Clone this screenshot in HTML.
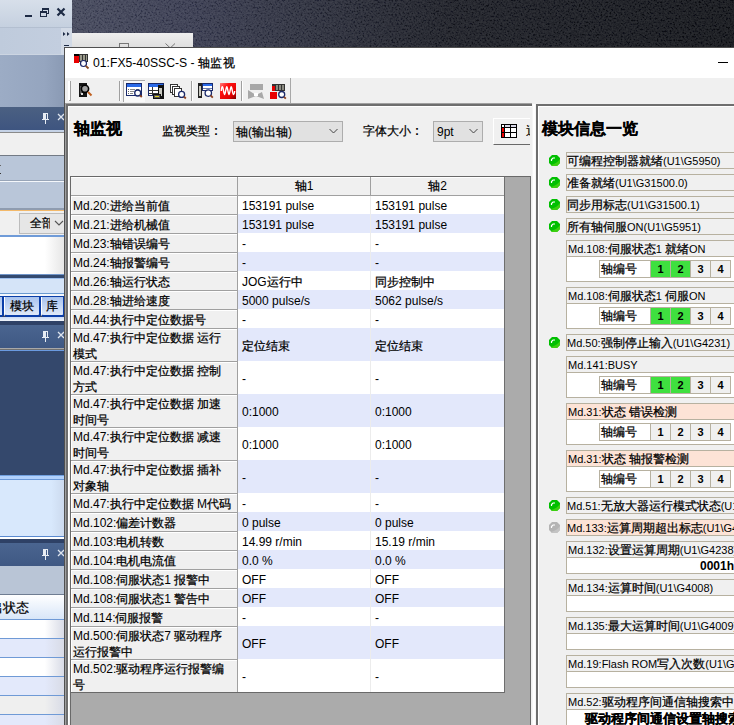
<!DOCTYPE html>
<html><head><meta charset="utf-8">
<style>
*{margin:0;padding:0;box-sizing:border-box}
html,body{width:734px;height:725px;overflow:hidden}
body{position:relative;font-family:"Liberation Sans",sans-serif;font-size:12px;color:#000;background:linear-gradient(90deg,#3e4256 0px,#3e4256 72px,#32354a 190px,#262937 300px,#14161d 450px,#0a0c10 734px)}
.a{position:absolute}
.tr{position:absolute;left:0;width:433px}
.tr .c0{position:absolute;left:0;top:0;width:166px;height:100%;background:#f0f0f0;border-top:1px solid #a0a0a0;box-shadow:inset 1px 1px 0 #fff;padding:2px 0 0 2px;line-height:16px;white-space:nowrap}
.tr .c1,.tr .c2{position:absolute;top:0;height:100%;padding-left:4px;padding-top:2px;line-height:19px;white-space:nowrap}
.tr .c1{left:166px;width:133px;border-left:1px solid #a0a0a0}
.tr .c2{left:299px;width:134px;border-left:1px solid #ececec}
.tr.t2 .c1,.tr.t2 .c2{line-height:32px}
.tr.t2 .c0{line-height:15.5px;padding-top:2px}
.w .c1,.w .c2{background:#fff}
.b .c1,.b .c2{background:#e3e8fb}
.led{position:absolute;left:549px}
.box{position:absolute;left:566px;width:180px;height:17px;font-size:11px;border:1px solid #b7b1a0;background:#f0f0f0;padding-left:0;padding-top:1px;line-height:15px;white-space:nowrap;color:#000;overflow:hidden}
.grp{position:absolute;left:566px;width:180px;font-size:11px;border:1px solid #b7b1a0;background:#fff}
.grp .hd{height:16px;background:#f0f0f0;border-bottom:1px solid #b7b1a0;padding-left:1px;padding-top:1px;line-height:15px;white-space:nowrap;overflow:hidden}
.grp .hd.pk{background:#fde3d6}
.ax{position:absolute;left:32px;top:19px;height:18px;border:1px solid #b7b1a0;display:flex;background:#fff}
.ax div{height:16px;line-height:16px;text-align:center;font-weight:bold;width:20px;border-left:1px solid #b7b1a0;background:#f0f0f0}
.ax div.n{width:50px;border-left:0;background:#fff;font-weight:normal;text-align:left;padding-left:1px;font-size:12px}
.ax div.g{background:#3fe03f}
.k{display:inline-block;text-align:justify;text-align-last:justify;text-indent:0;-webkit-text-stroke:0.25px}
.box .k,.grp .hd .k{font-size:12px}
</style></head><body>

<svg class="a" style="left:72px;top:0" width="662" height="48"><filter id="nz" x="0" y="0" width="100%" height="100%"><feTurbulence type="fractalNoise" baseFrequency="0.55" numOctaves="2" seed="7"/><feColorMatrix values="2.5 0 0 0 -0.75  2.5 0 0 0 -0.75  2.5 0 0 0 -0.7  0 0 0 0 0.12"/></filter><rect width="662" height="48" filter="url(#nz)"/></svg>
<!-- left app panel -->
<div class="a" style="left:0;top:0;width:72px;height:28px;background:linear-gradient(#d7dfea,#c5d0df);border-bottom:1px solid #b3bfd0"></div>
<div class="a" style="left:25px;top:15px;width:7px;height:2px;background:#1d2a44"></div>
<div class="a" style="left:42px;top:8px;width:7px;height:6px;border:1px solid #1d2a44;border-top-width:2px"></div>
<div class="a" style="left:40px;top:11px;width:7px;height:6px;border:1px solid #1d2a44;border-top-width:2px;background:#cdd6e3"></div>
<svg class="a" style="left:56px;top:7px" width="10" height="10"><path d="M1.5,1.5 L8.5,8.5 M8.5,1.5 L1.5,8.5" stroke="#1d2a44" stroke-width="2.2"/></svg>
<div class="a" style="left:0;top:28px;width:61px;height:27px;background:linear-gradient(90deg,#bfcbdc,#c3cedf);border-bottom:1px solid #ccd5e2"></div>
<div class="a" style="left:61px;top:28px;width:11px;height:27px;background:#d2dae6"></div>
<svg class="a" style="left:63px;top:32px" width="8" height="5"><path d="M0,0 L2.5,2 L0,4Z M4,0 L6.5,2 L4,4Z" fill="#1d2a44"/></svg>
<div class="a" style="left:64px;top:45px;width:5px;height:1px;background:#1d2a44"></div>
<div class="a" style="left:0;top:55px;width:64px;height:52px;background:linear-gradient(90deg,#9cacc5,#95a5bf 70%,#8a9ab4)"></div>
<div class="a" style="left:0;top:107px;width:64px;height:23px;background:linear-gradient(#4b6082,#3e5580)"></div>
<div class="a" style="left:0;top:130px;width:64px;height:2px;background:#c5d2e6"></div>
<div class="a" style="left:0;top:132px;width:64px;height:1px;background:#8a8a8a"></div><div class="a" style="left:0;top:133px;width:64px;height:22px;background:#f0f0f0"></div>
<div class="a" style="left:0;top:155px;width:64px;height:1px;background:#737a85"></div>
<div class="a" style="left:0;top:156px;width:64px;height:52px;background:#b9c6d9"></div>
<div class="a" style="left:0;top:180px;width:64px;height:1px;background:#98a5b8"></div><div class="a" style="left:0;top:181px;width:64px;height:1px;background:#f4f7fb"></div>
<div class="a" style="left:0;top:208px;width:64px;height:2px;background:#8f9cb0"></div>
<div class="a" style="left:0;top:210px;width:64px;height:1px;background:#f3b96a"></div>
<div class="a" style="left:0;top:211px;width:64px;height:24px;background:#f0f0f0"></div>
<div class="a" style="left:19px;top:213px;width:47px;height:21px;border:1px solid #bcbcbc;background:#e6e6e6;padding-left:10px;line-height:19px;overflow:hidden;white-space:nowrap"><span class="k" style="width:2em">全部</span></div>
<div class="a" style="left:50px;top:214px;width:14px;height:19px;background:#e6e6e6"></div>
<svg class="a" style="left:54px;top:219px" width="10" height="8"><path d="M1,2 L5,6 L9,2" stroke="#555" stroke-width="1.1" fill="none"/></svg>
<div class="a" style="left:0;top:165px;width:1px;height:1px;background:#666"></div><div class="a" style="left:0;top:173px;width:1px;height:1px;background:#333"></div>
<div class="a" style="left:0;top:235px;width:64px;height:2px;background:#6f9bd8"></div>
<div class="a" style="left:0;top:237px;width:64px;height:37px;background:linear-gradient(90deg,#fff 70%,#e6e6e6)"></div>
<div class="a" style="left:0;top:274px;width:64px;height:1px;background:#6f94c8"></div>
<div class="a" style="left:0;top:275px;width:64px;height:3px;background:#334a70"></div>
<div class="a" style="left:0;top:278px;width:64px;height:1px;background:#9ec0ee"></div>
<div class="a" style="left:0;top:279px;width:64px;height:14px;background:#d5e4f8"></div>
<div class="a" style="left:0;top:293px;width:64px;height:1px;background:#6a9ad0"></div>
<div class="a" style="left:0;top:294px;width:64px;height:2px;background:#f4f7fc"></div>
<div class="a" style="left:0;top:296px;width:64px;height:2px;background:#0b3ea8"></div>
<div class="a" style="left:0;top:317px;width:64px;height:4px;background:linear-gradient(#c8daf6,#f0f4fa)"></div>
<div class="a" style="left:-20px;top:297px;width:24px;height:20px;border:2px solid #0b3ea8;border-top:0;border-radius:0 0 3px 3px;background:linear-gradient(#a9c3ee,#dfe9f8)"></div>
<div class="a" style="left:4px;top:297px;width:37px;height:20px;border:2px solid #0b3ea8;border-top:0;border-left:1px solid #fff;border-radius:0 0 3px 3px;background:linear-gradient(#a9c3ee,#dfe9f8);padding-left:5px;line-height:18px;white-space:nowrap"><span class="k" style="width:2em">模块</span></div>
<div class="a" style="left:41px;top:297px;width:24px;height:20px;border:2px solid #0b3ea8;border-top:0;border-left:1px solid #fff;border-radius:0 0 3px 3px;background:linear-gradient(#a9c3ee,#dfe9f8);padding-left:4px;line-height:18px;white-space:nowrap"><span class="k" style="width:1em">库</span></div>
<div class="a" style="left:0;top:321px;width:64px;height:4px;background:#2e4166"></div><div class="a" style="left:0;top:325px;width:64px;height:23px;background:linear-gradient(#4a6590,#3f5883)"></div>
<div class="a" style="left:0;top:348px;width:64px;height:1px;background:#a8a8a8"></div><div class="a" style="left:0;top:349px;width:64px;height:1px;background:#707070"></div><div class="a" style="left:0;top:350px;width:64px;height:1px;background:#6a9ae0"></div>
<div class="a" style="left:0;top:351px;width:64px;height:124px;background:#34486c"></div>
<div class="a" style="left:0;top:475px;width:64px;height:1px;background:#70a0e0"></div><div class="a" style="left:0;top:476px;width:64px;height:3px;background:#b0d0fc"></div><div class="a" style="left:0;top:479px;width:64px;height:1px;background:#6a98d8"></div>
<div class="a" style="left:0;top:480px;width:64px;height:56px;background:linear-gradient(90deg,#d8e8fc 80%,#ccdaee)"></div>
<div class="a" style="left:0;top:536px;width:64px;height:1px;background:#5a8ad0"></div>
<div class="a" style="left:0;top:537px;width:64px;height:2px;background:#fff"></div>
<div class="a" style="left:0;top:539px;width:64px;height:4px;background:#2e4166"></div><div class="a" style="left:0;top:543px;width:64px;height:23px;background:linear-gradient(#4a6590,#3f5883)"></div>
<div class="a" style="left:0;top:566px;width:64px;height:28px;background:#b9c5d6"></div>
<div class="a" style="left:0;top:594px;width:64px;height:1px;background:#6f7d92"></div>
<div class="a" style="left:0;top:595px;width:64px;height:24px;background:linear-gradient(#fff,#d8e6f8);padding-left:0;line-height:26px;white-space:nowrap;font-size:13px;text-indent:-10px"><span class="k" style="width:3em">出状态</span></div>
<div class="a" style="left:0;top:619px;width:64px;height:19px;border-top:1px solid #6f9ad6;background:linear-gradient(90deg,#ffffff 70%,#d8dbe6)"></div>
<div class="a" style="left:0;top:638px;width:64px;height:19px;border-top:1px solid #6f9ad6;background:linear-gradient(90deg,#e3e9fb 70%,#d8dbe6)"></div>
<div class="a" style="left:0;top:657px;width:64px;height:19px;border-top:1px solid #6f9ad6;background:linear-gradient(90deg,#ffffff 70%,#d8dbe6)"></div>
<div class="a" style="left:0;top:676px;width:64px;height:19px;border-top:1px solid #6f9ad6;background:linear-gradient(90deg,#e3e9fb 70%,#d8dbe6)"></div>
<div class="a" style="left:0;top:695px;width:64px;height:19px;border-top:1px solid #6f9ad6;background:linear-gradient(90deg,#efefef 70%,#d8dbe6)"></div>
<div class="a" style="left:0;top:714px;width:64px;height:19px;border-top:1px solid #6f9ad6;background:linear-gradient(90deg,#e3e9fb 70%,#d8dbe6)"></div>
<!-- pins -->
<svg class="a" style="left:40px;top:107px" width="24" height="24" viewBox="0 0 24 24" shape-rendering="crispEdges">
<rect x="3" y="6" width="1" height="6" fill="#e8edf4"/><rect x="7" y="6" width="1" height="6" fill="#e8edf4"/><rect x="3" y="6" width="5" height="1" fill="#e8edf4"/><rect x="4" y="6" width="2" height="6" fill="#e8edf4"/>
<rect x="2" y="12" width="7" height="1" fill="#e8edf4"/><rect x="5" y="13" width="1" height="4" fill="#e8edf4"/>
<path d="M18,7 L24,13 M24,7 L18,13" stroke="#dfe5ee" stroke-width="1.3" shape-rendering="geometricPrecision"/>
</svg>
<svg class="a" style="left:40px;top:325px" width="24" height="24" viewBox="0 0 24 24" shape-rendering="crispEdges">
<rect x="3" y="6" width="1" height="6" fill="#e8edf4"/><rect x="7" y="6" width="1" height="6" fill="#e8edf4"/><rect x="3" y="6" width="5" height="1" fill="#e8edf4"/><rect x="4" y="6" width="2" height="6" fill="#e8edf4"/>
<rect x="2" y="12" width="7" height="1" fill="#e8edf4"/><rect x="5" y="13" width="1" height="4" fill="#e8edf4"/>
<path d="M18,7 L24,13 M24,7 L18,13" stroke="#dfe5ee" stroke-width="1.3" shape-rendering="geometricPrecision"/>
</svg>
<svg class="a" style="left:40px;top:543px" width="24" height="24" viewBox="0 0 24 24" shape-rendering="crispEdges">
<rect x="3" y="6" width="1" height="6" fill="#e8edf4"/><rect x="7" y="6" width="1" height="6" fill="#e8edf4"/><rect x="3" y="6" width="5" height="1" fill="#e8edf4"/><rect x="4" y="6" width="2" height="6" fill="#e8edf4"/>
<rect x="2" y="12" width="7" height="1" fill="#e8edf4"/><rect x="5" y="13" width="1" height="4" fill="#e8edf4"/>
<path d="M18,7 L24,13 M24,7 L18,13" stroke="#dfe5ee" stroke-width="1.3" shape-rendering="geometricPrecision"/>
</svg>

<!-- window behind -->
<div class="a" style="left:72px;top:33px;width:121px;height:20px;background:linear-gradient(#eeeeee,#d9d9d9)"></div>
<div class="a" style="left:119px;top:43px;width:10px;height:8px;border:1px solid #777"></div>
<svg class="a" style="left:165px;top:43px" width="12" height="8"><path d="M0.5,0.5 L10,9.5 M10,0.5 L0.5,9.5" stroke="#777" stroke-width="1"/></svg>

<!-- main window -->
<div class="a" style="left:64px;top:47px;width:680px;height:690px;background:#f0f0f0;border-top:1px solid #505050;border-left:1px solid #505050"></div>
<div class="a" style="left:65px;top:48px;width:680px;height:30px;background:#fff"></div>
<div class="a" style="left:93px;top:55px;font-size:12.2px;line-height:16px;white-space:nowrap">01:FX5-40SSC-S - <span class="k" style="width:3em">轴监视</span></div>
<div class="a" style="left:718px;top:62px;width:10px;height:1px;background:#000"></div>
<!-- toolbar -->
<div class="a" style="left:65px;top:78px;width:680px;height:25px;background:#f0f0f0"></div>
<div class="a" style="left:290px;top:78px;width:1px;height:26px;background:#a8a8a8"></div>
<svg class="a" style="left:0;top:0" width="300" height="105" viewBox="0 0 300 105"><defs><linearGradient id="redg" x1="0" y1="0" x2="1" y2="1"><stop offset="0" stop-color="#ff8080"/><stop offset="0.3" stop-color="#ff1010"/><stop offset="0.75" stop-color="#e00000"/><stop offset="1" stop-color="#700000"/></linearGradient></defs>
 <g shape-rendering="crispEdges">
 <rect x="74" y="54" width="5" height="9" fill="#e80000"/>
 <rect x="74" y="54" width="5" height="2" fill="#000"/>
 <rect x="79" y="54" width="9" height="8" fill="#333"/>
 <rect x="80" y="55" width="2" height="6" fill="#9a9a8a"/>
 <rect x="83" y="55" width="2" height="6" fill="#9a9a8a"/>
 <rect x="86" y="55" width="1" height="6" fill="#9a9a8a"/>
 <!-- grippers/separators -->
 <rect x="68" y="81" width="2" height="20" fill="#fff"/><rect x="70" y="81" width="1" height="20" fill="#a0a0a0"/>
 <rect x="69" y="100" width="2" height="1" fill="#a0a0a0"/>
 <rect x="119" y="81" width="1" height="20" fill="#a0a0a0"/><rect x="120" y="81" width="1" height="20" fill="#fff"/>
 <rect x="191" y="81" width="1" height="20" fill="#a0a0a0"/><rect x="192" y="81" width="1" height="20" fill="#fff"/>
 <rect x="241" y="81" width="1" height="20" fill="#a0a0a0"/><rect x="242" y="81" width="1" height="20" fill="#fff"/>
 <!-- pressed button -->
 <rect x="123" y="80" width="22" height="22" fill="#f9f9f9"/>
 <rect x="123" y="80" width="22" height="1" fill="#a8a8a8"/><rect x="123" y="80" width="1" height="22" fill="#a8a8a8"/>
 <!-- icon1 -->
 <rect x="79" y="83" width="8" height="14" fill="#151515"/>
 <rect x="80" y="86" width="2" height="8" fill="#555"/>
 <rect x="81" y="93" width="2" height="2" fill="#ddd"/>
 <!-- icon2 -->
 <rect x="126" y="83" width="16" height="13" fill="#1a2a6a"/>
 <rect x="127" y="84" width="14" height="3" fill="#2a6ae8"/>
 <rect x="127" y="87" width="14" height="8" fill="#fff"/>
 <rect x="128" y="89" width="1" height="1" fill="#666"/><rect x="130" y="89" width="5" height="1" fill="#888"/><rect x="136" y="89" width="3" height="1" fill="#888"/>
 <rect x="128" y="91" width="1" height="1" fill="#666"/><rect x="130" y="91" width="4" height="1" fill="#888"/>
 <rect x="128" y="93" width="1" height="1" fill="#666"/><rect x="130" y="93" width="3" height="1" fill="#888"/>
 <!-- icon3 -->
 <rect x="148" y="83" width="16" height="13" fill="#1a2a6a"/>
 <rect x="149" y="84" width="14" height="3" fill="#2a6ae8"/>
 <rect x="149" y="87" width="9" height="8" fill="#fff"/>
 <rect x="149" y="90" width="9" height="1" fill="#333"/><rect x="149" y="93" width="9" height="1" fill="#333"/><rect x="152" y="87" width="1" height="8" fill="#333"/>
 <rect x="158" y="85" width="6" height="14" fill="#111"/>
 <rect x="159" y="88" width="3" height="8" fill="#c8c8c0"/>
 <rect x="153" y="94" width="8" height="5" fill="#111"/>
 <rect x="154" y="95" width="6" height="3" fill="#555"/>
 <rect x="155" y="96" width="4" height="1" fill="#e0d020"/>
 <!-- icon4 -->
 <rect x="170" y="84" width="7" height="8" fill="#fff" stroke="#333" stroke-width="1"/>
 <rect x="172" y="86" width="7" height="8" fill="#fff" stroke="#333" stroke-width="1"/>
 <rect x="174" y="88" width="7" height="8" fill="#fff" stroke="#333" stroke-width="1"/>
 <!-- icon5 -->
 <rect x="198" y="83" width="4" height="15" fill="#222"/>
 <rect x="199" y="86" width="2" height="10" fill="#c8c8c0"/>
 <rect x="202" y="83" width="11" height="8" fill="#1a2a6a"/>
 <rect x="203" y="84" width="9" height="2" fill="#2a6ae8"/>
 <rect x="203" y="86" width="9" height="4" fill="#fff"/>
 <rect x="203" y="88" width="9" height="1" fill="#6a7ab0"/>
 <!-- icon6 -->
 <rect x="220" y="83" width="16" height="16" fill="url(#redg)"/>
 <!-- icon7 -->
 <rect x="250" y="84" width="13" height="6" fill="#a8a8a8"/>
 <!-- icon8 -->
 <rect x="272" y="84" width="13" height="7" fill="#333"/>
 <rect x="272" y="86" width="3" height="5" fill="#e80000"/>
 <rect x="276" y="85" width="2" height="5" fill="#8a8a80"/><rect x="279" y="85" width="2" height="5" fill="#8a8a80"/><rect x="282" y="85" width="2" height="5" fill="#8a8a80"/>
 <rect x="270" y="92" width="7" height="7" fill="#e80000"/>
 </g>
 <polygon points="248,90 256,95 262,92 264,99 256,96 248,99" fill="#a8a8a8"/>
 <rect x="254" y="93" width="4" height="3" fill="#fff"/>
 <path d="M221.3,91 C221.5,88 221.9,86.8 222.4,86.8 C223.20000000000002,86.8 223.79999999999998,94.5 224.6,94.5 C225.4,94.5 226.0,86.8 226.8,86.8 C227.60000000000002,86.8 228.2,94.5 229,94.5 C229.8,94.5 230.39999999999998,86.8 231.2,86.8 C232.0,86.8 232.6,94.5 233.4,94.5 C234,94.5 234.5,93 234.7,91" fill="none" stroke="#fff" stroke-width="1.4"/>
 <!-- magnifiers -->
 <circle cx="83.5" cy="63.5" r="3" fill="#fff" stroke="#1f2a6a" stroke-width="1.2"/>
 <line x1="85.8" y1="65.8" x2="88.5" y2="68.5" stroke="#8a4a20" stroke-width="1.8"/>
 <circle cx="85" cy="88.8" r="3.6" fill="#a0a0a0" stroke="#000" stroke-width="1.6"/>
 <line x1="88" y1="92" x2="91.5" y2="95.5" stroke="#c06020" stroke-width="2"/>
 <circle cx="137.7" cy="93" r="3" fill="#fff" stroke="#1a2a6a" stroke-width="1.3"/>
 <line x1="140" y1="95.3" x2="141.8" y2="97" stroke="#8a4020" stroke-width="1.8"/>
 <circle cx="181.6" cy="94.4" r="3" fill="#fff" stroke="#1a2a6a" stroke-width="1.3"/>
 <line x1="184" y1="96.7" x2="185.8" y2="98.5" stroke="#8a4020" stroke-width="1.8"/>
 <circle cx="208.3" cy="93.1" r="3.2" fill="#fff" stroke="#1a2a6a" stroke-width="1.3"/>
 <line x1="210.6" y1="95.4" x2="212.8" y2="97.6" stroke="#8a4020" stroke-width="1.8"/>
 <circle cx="281.7" cy="94.5" r="3" fill="#fff" stroke="#1a2a6a" stroke-width="1.3"/>
 <line x1="284" y1="96.8" x2="285.8" y2="98.6" stroke="#8a4020" stroke-width="1.8"/>
</svg>

<!-- left content panel -->
<div class="a" style="left:65px;top:103px;width:467px;height:630px;border-top:1px solid #a0a0a0;border-left:1px solid #a0a0a0"></div>
<div class="a" style="left:66px;top:104px;width:466px;height:630px;border-top:2px solid #6e6e6e;border-left:2px solid #6e6e6e;background:#f0f0f0;box-shadow:inset 1px 1px 0 #fff"></div>
<div class="a" style="left:74px;top:120px;font-size:16px;font-weight:bold;line-height:18px"><span class="k" style="width:3em">轴监视</span></div>
<div class="a" style="left:162px;top:124px;line-height:15px"><span class="k" style="width:4em">监视类型</span><span style="margin-left:4px;font-weight:bold">:</span></div>
<div class="a" style="left:233px;top:121px;width:110px;height:21px;border:1px solid #adadad;background:#e1e1e1;padding-left:2px;padding-top:1px;line-height:19px"><span class="k" style="width:1em">轴</span>(<span class="k" style="width:3em">输出轴</span>)</div>
<svg class="a" style="left:329px;top:128px" width="10" height="7"><path d="M0.5,1 L4.5,5 L8.5,1" stroke="#444" stroke-width="1" fill="none"/></svg>
<div class="a" style="left:363px;top:124px;line-height:15px"><span class="k" style="width:4em">字体大小</span><span style="margin-left:4px;font-weight:bold">:</span></div>
<div class="a" style="left:433px;top:121px;width:50px;height:21px;border:1px solid #adadad;background:#e1e1e1;padding-left:3px;padding-top:1px;line-height:19px">9pt</div>
<svg class="a" style="left:469px;top:128px" width="10" height="7"><path d="M0.5,1 L4.5,5 L8.5,1" stroke="#444" stroke-width="1" fill="none"/></svg>
<div class="a" style="left:492px;top:117px;width:38px;height:29px;overflow:hidden">
<div class="a" style="left:1px;top:1px;width:60px;height:27px;border-top:1px solid #fff;border-left:1px solid #fff;border-bottom:1px solid #696969;background:#f0f0f0"></div>
<svg class="a" style="left:9px;top:7px" width="16" height="14" shape-rendering="crispEdges"><rect x="0" y="0" width="16" height="14" fill="#000"/><rect x="1" y="1" width="14" height="12" fill="#fff"/><rect x="3" y="0" width="1" height="14" fill="#000"/><rect x="9" y="0" width="1" height="14" fill="#000"/><rect x="0" y="3" width="16" height="1" fill="#000"/><rect x="0" y="8" width="16" height="1" fill="#000"/><rect x="1" y="4" width="2" height="4" fill="#e00"/><rect x="1" y="9" width="2" height="4" fill="#e00"/><rect x="4" y="1" width="5" height="2" fill="#d8d8e8"/><rect x="10" y="1" width="5" height="2" fill="#d8d8e8"/></svg>
<div class="a" style="left:34px;top:7px;line-height:15px"><span class="k" style="width:1em">通</span></div>
</div>

<!-- grid -->
<div class="a" style="left:70px;top:176px;width:461px;height:560px;background:#ababab;border-top:1px solid #696969;border-left:1px solid #696969;border-right:1px solid #696969;overflow:hidden">
  <div class="a" style="left:0;top:0;width:433px;height:19px;background:#f0f0f0;border-top:1px solid #fff;border-bottom:1px solid #a0a0a0;z-index:2">
    <div class="a" style="left:166px;top:-1px;width:1px;height:19px;background:#a0a0a0"></div>
    <div class="a" style="left:299px;top:-1px;width:1px;height:19px;background:#a0a0a0"></div>
    <div class="a" style="left:167px;top:0;width:132px;text-align:center;line-height:16px"><span class="k" style="width:1em">轴</span>1</div>
    <div class="a" style="left:300px;top:0;width:133px;text-align:center;line-height:16px"><span class="k" style="width:1em">轴</span>2</div>
  </div>
<div class="tr w" style="top:18px;height:19px"><div class="c0">Md.20:<span class="k" style="width:5em">进给当前值</span></div><div class="c1">153191 pulse</div><div class="c2">153191 pulse</div></div>
<div class="tr b" style="top:37px;height:19px"><div class="c0">Md.21:<span class="k" style="width:5em">进给机械值</span></div><div class="c1">153191 pulse</div><div class="c2">153191 pulse</div></div>
<div class="tr w" style="top:56px;height:19px"><div class="c0">Md.23:<span class="k" style="width:5em">轴错误编号</span></div><div class="c1">-</div><div class="c2">-</div></div>
<div class="tr b" style="top:75px;height:19px"><div class="c0">Md.24:<span class="k" style="width:5em">轴报警编号</span></div><div class="c1">-</div><div class="c2">-</div></div>
<div class="tr w" style="top:94px;height:19px"><div class="c0">Md.26:<span class="k" style="width:5em">轴运行状态</span></div><div class="c1">JOG<span class="k" style="width:3em">运行中</span></div><div class="c2"><span class="k" style="width:5em">同步控制中</span></div></div>
<div class="tr b" style="top:113px;height:19px"><div class="c0">Md.28:<span class="k" style="width:5em">轴进给速度</span></div><div class="c1">5000 pulse/s</div><div class="c2">5062 pulse/s</div></div>
<div class="tr w" style="top:132px;height:19px"><div class="c0">Md.44:<span class="k" style="width:8em">执行中定位数据号</span></div><div class="c1">-</div><div class="c2">-</div></div>
<div class="tr b t2" style="top:151px;height:33px"><div class="c0">Md.47:<span class="k" style="width:7em">执行中定位数据</span> <span class="k" style="width:2em">运行</span><br><span class="k" style="width:2em">模式</span></div><div class="c1"><span class="k" style="width:4em">定位结束</span></div><div class="c2"><span class="k" style="width:4em">定位结束</span></div></div>
<div class="tr w t2" style="top:184px;height:33px"><div class="c0">Md.47:<span class="k" style="width:7em">执行中定位数据</span> <span class="k" style="width:2em">控制</span><br><span class="k" style="width:2em">方式</span></div><div class="c1">-</div><div class="c2">-</div></div>
<div class="tr b t2" style="top:217px;height:33px"><div class="c0">Md.47:<span class="k" style="width:7em">执行中定位数据</span> <span class="k" style="width:2em">加速</span><br><span class="k" style="width:3em">时间号</span></div><div class="c1">0:1000</div><div class="c2">0:1000</div></div>
<div class="tr w t2" style="top:250px;height:33px"><div class="c0">Md.47:<span class="k" style="width:7em">执行中定位数据</span> <span class="k" style="width:2em">减速</span><br><span class="k" style="width:3em">时间号</span></div><div class="c1">0:1000</div><div class="c2">0:1000</div></div>
<div class="tr b t2" style="top:283px;height:33px"><div class="c0">Md.47:<span class="k" style="width:7em">执行中定位数据</span> <span class="k" style="width:2em">插补</span><br><span class="k" style="width:3em">对象轴</span></div><div class="c1">-</div><div class="c2">-</div></div>
<div class="tr w" style="top:316px;height:19px"><div class="c0">Md.47:<span class="k" style="width:7em">执行中定位数据</span> M<span class="k" style="width:2em">代码</span></div><div class="c1">-</div><div class="c2">-</div></div>
<div class="tr b" style="top:335px;height:19px"><div class="c0">Md.102:<span class="k" style="width:5em">偏差计数器</span></div><div class="c1">0 pulse</div><div class="c2">0 pulse</div></div>
<div class="tr w" style="top:354px;height:19px"><div class="c0">Md.103:<span class="k" style="width:4em">电机转数</span></div><div class="c1">14.99 r/min</div><div class="c2">15.19 r/min</div></div>
<div class="tr b" style="top:373px;height:19px"><div class="c0">Md.104:<span class="k" style="width:5em">电机电流值</span></div><div class="c1">0.0 %</div><div class="c2">0.0 %</div></div>
<div class="tr w" style="top:392px;height:19px"><div class="c0">Md.108:<span class="k" style="width:4em">伺服状态</span>1 <span class="k" style="width:3em">报警中</span></div><div class="c1">OFF</div><div class="c2">OFF</div></div>
<div class="tr b" style="top:411px;height:19px"><div class="c0">Md.108:<span class="k" style="width:4em">伺服状态</span>1 <span class="k" style="width:3em">警告中</span></div><div class="c1">OFF</div><div class="c2">OFF</div></div>
<div class="tr w" style="top:430px;height:19px"><div class="c0">Md.114:<span class="k" style="width:4em">伺服报警</span></div><div class="c1">-</div><div class="c2">-</div></div>
<div class="tr b t2" style="top:449px;height:33px"><div class="c0">Md.500:<span class="k" style="width:4em">伺服状态</span>7 <span class="k" style="width:4em">驱动程序</span><br><span class="k" style="width:5em">运行报警中</span></div><div class="c1">OFF</div><div class="c2">OFF</div></div>
<div class="tr w t2" style="top:482px;height:33px"><div class="c0">Md.502:<span class="k" style="width:9em">驱动程序运行报警编</span><br><span class="k" style="width:1em">号</span></div><div class="c1">-</div><div class="c2">-</div></div>
  <div class="a" style="left:0;top:515px;width:434px;height:1px;background:#696969"></div>
  <div class="a" style="left:433px;top:0;width:1px;height:516px;background:#6e6e6e"></div>
</div>
<div class="a" style="left:532px;top:104px;width:4px;height:630px;background:#f0f0f0;border-left:1px solid #f6f6f6;border-right:1px solid #f6f6f6"></div><div class="a" style="left:533px;top:104px;width:2px;height:630px;background:#fff"></div>

<!-- right panel -->
<div class="a" style="left:536px;top:104px;width:210px;height:630px;border-top:2px solid #6e6e6e;border-left:2px solid #6e6e6e;background:#f0f0f0;box-shadow:inset 1px 1px 0 #fff"></div>
<div class="a" style="left:542px;top:120px;font-size:16px;font-weight:bold;line-height:18px;white-space:nowrap"><span class="k" style="width:6em">模块信息一览</span></div>

<svg class="led" style="top:155px" width="11" height="11" viewBox="0 0 11 11"><polygon points="3,0 8,0 11,3 11,8 8,11 3,11 0,8 0,3" fill="#00bf00"/><path d="M11,4 L11,8 L8,11 L3,11 L2,10 C6,9 9,7 11,4Z" fill="#3ccf10"/><path d="M2.5,6 L2.5,4.5 L4,3 L6,3" stroke="#fff" stroke-width="1.2" fill="none"/></svg><div class="box" style="top:152px"><span class="k" style="width:8em">可编程控制器就绪</span>(U1\G5950)</div>
<svg class="led" style="top:177px" width="11" height="11" viewBox="0 0 11 11"><polygon points="3,0 8,0 11,3 11,8 8,11 3,11 0,8 0,3" fill="#00bf00"/><path d="M11,4 L11,8 L8,11 L3,11 L2,10 C6,9 9,7 11,4Z" fill="#3ccf10"/><path d="M2.5,6 L2.5,4.5 L4,3 L6,3" stroke="#fff" stroke-width="1.2" fill="none"/></svg><div class="box" style="top:174px"><span class="k" style="width:4em">准备就绪</span>(U1\G31500.0)</div>
<svg class="led" style="top:199px" width="11" height="11" viewBox="0 0 11 11"><polygon points="3,0 8,0 11,3 11,8 8,11 3,11 0,8 0,3" fill="#00bf00"/><path d="M11,4 L11,8 L8,11 L3,11 L2,10 C6,9 9,7 11,4Z" fill="#3ccf10"/><path d="M2.5,6 L2.5,4.5 L4,3 L6,3" stroke="#fff" stroke-width="1.2" fill="none"/></svg><div class="box" style="top:196px"><span class="k" style="width:5em">同步用标志</span>(U1\G31500.1)</div>
<svg class="led" style="top:221px" width="11" height="11" viewBox="0 0 11 11"><polygon points="3,0 8,0 11,3 11,8 8,11 3,11 0,8 0,3" fill="#00bf00"/><path d="M11,4 L11,8 L8,11 L3,11 L2,10 C6,9 9,7 11,4Z" fill="#3ccf10"/><path d="M2.5,6 L2.5,4.5 L4,3 L6,3" stroke="#fff" stroke-width="1.2" fill="none"/></svg><div class="box" style="top:218px"><span class="k" style="width:5em">所有轴伺服</span>ON(U1\G5951)</div>

<div class="grp" style="top:240px;height:42px"><div class="hd">Md.108:<span class="k" style="width:4em">伺服状态</span>1 <span class="k" style="width:2em">就绪</span>ON</div><div class="ax" style="top:19px"><div class="n"><span class="k" style="width:3em">轴编号</span></div><div class="g">1</div><div class="g">2</div><div>3</div><div>4</div></div></div>
<div class="grp" style="top:287px;height:42px"><div class="hd">Md.108:<span class="k" style="width:4em">伺服状态</span>1 <span class="k" style="width:2em">伺服</span>ON</div><div class="ax" style="top:19px"><div class="n"><span class="k" style="width:3em">轴编号</span></div><div class="g">1</div><div class="g">2</div><div>3</div><div>4</div></div></div>
<svg class="led" style="top:337px" width="11" height="11" viewBox="0 0 11 11"><polygon points="3,0 8,0 11,3 11,8 8,11 3,11 0,8 0,3" fill="#00bf00"/><path d="M11,4 L11,8 L8,11 L3,11 L2,10 C6,9 9,7 11,4Z" fill="#3ccf10"/><path d="M2.5,6 L2.5,4.5 L4,3 L6,3" stroke="#fff" stroke-width="1.2" fill="none"/></svg><div class="box" style="top:334px">Md.50:<span class="k" style="width:6em">强制停止输入</span>(U1\G4231)</div>
<div class="grp" style="top:356px;height:42px"><div class="hd">Md.141:BUSY</div><div class="ax" style="top:19px"><div class="n"><span class="k" style="width:3em">轴编号</span></div><div class="g">1</div><div class="g">2</div><div>3</div><div>4</div></div></div>
<div class="grp" style="top:403px;height:42px"><div class="hd pk">Md.31:<span class="k" style="width:2em">状态</span> <span class="k" style="width:4em">错误检测</span></div><div class="ax" style="top:19px"><div class="n"><span class="k" style="width:3em">轴编号</span></div><div>1</div><div>2</div><div>3</div><div>4</div></div></div>
<div class="grp" style="top:450px;height:42px"><div class="hd pk">Md.31:<span class="k" style="width:2em">状态</span> <span class="k" style="width:5em">轴报警检测</span></div><div class="ax" style="top:19px"><div class="n"><span class="k" style="width:3em">轴编号</span></div><div>1</div><div>2</div><div>3</div><div>4</div></div></div>
<svg class="led" style="top:500px" width="11" height="11" viewBox="0 0 11 11"><polygon points="3,0 8,0 11,3 11,8 8,11 3,11 0,8 0,3" fill="#00bf00"/><path d="M11,4 L11,8 L8,11 L3,11 L2,10 C6,9 9,7 11,4Z" fill="#3ccf10"/><path d="M2.5,6 L2.5,4.5 L4,3 L6,3" stroke="#fff" stroke-width="1.2" fill="none"/></svg><div class="box" style="top:497px">Md.51:<span class="k" style="width:10em">无放大器运行模式状态</span>(U1\G</div>
<svg class="led" style="top:522px" width="11" height="11" viewBox="0 0 11 11"><polygon points="3,0 8,0 11,3 11,8 8,11 3,11 0,8 0,3" fill="#b4b4b4"/><path d="M11,4 L11,8 L8,11 L3,11 L2,10 C6,9 9,7 11,4Z" fill="#c4c4c4"/><path d="M2.5,6 L2.5,4.5 L4,3 L6,3" stroke="#fff" stroke-width="1.2" fill="none"/></svg><div class="box" style="top:519px;background:#fde3d6">Md.133:<span class="k" style="width:8em">运算周期超出标志</span>(U1\G4</div>
<div class="grp" style="top:541px;height:33px"><div class="hd">Md.132:<span class="k" style="width:6em">设置运算周期</span>(U1\G4238)</div><div class="a" style="left:133px;top:17px;font-weight:bold;line-height:15px;font-size:12px">0001h</div></div>
<div class="grp" style="top:579px;height:33px"><div class="hd">Md.134:<span class="k" style="width:4em">运算时间</span>(U1\G4008)</div></div>
<div class="grp" style="top:617px;height:33px"><div class="hd">Md.135:<span class="k" style="width:6em">最大运算时间</span>(U1\G4009)</div></div>
<div class="grp" style="top:655px;height:33px"><div class="hd">Md.19:Flash ROM<span class="k" style="width:4em">写入次数</span>(U1\G4</div></div>
<div class="grp" style="top:693px;height:40px"><div class="hd">Md.52:<span class="k" style="width:11em">驱动程序间通信轴搜索中</span></div><div class="a" style="left:18px;top:17px;font-weight:bold;line-height:15px;font-size:13px;white-space:nowrap"><span class="k" style="width:12em">驱动程序间通信设置轴搜索</span></div></div>

</body></html>
